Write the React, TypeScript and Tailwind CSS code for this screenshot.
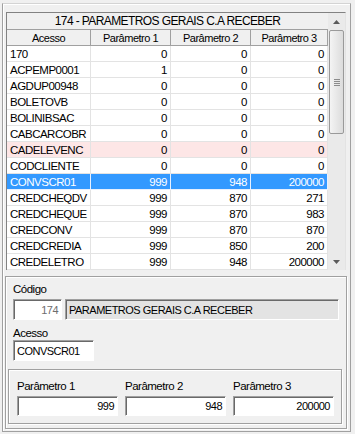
import React from "react";

const rows: { a: string; p1: string; p2: string; p3: string; kind?: "pink" | "sel" }[] = [
  { a: "170", p1: "0", p2: "0", p3: "0" },
  { a: "ACPEMP0001", p1: "1", p2: "0", p3: "0" },
  { a: "AGDUP00948", p1: "0", p2: "0", p3: "0" },
  { a: "BOLETOVB", p1: "0", p2: "0", p3: "0" },
  { a: "BOLINIBSAC", p1: "0", p2: "0", p3: "0" },
  { a: "CABCARCOBR", p1: "0", p2: "0", p3: "0" },
  { a: "CADELEVENC", p1: "0", p2: "0", p3: "0", kind: "pink" },
  { a: "CODCLIENTE", p1: "0", p2: "0", p3: "0" },
  { a: "CONVSCR01", p1: "999", p2: "948", p3: "200000", kind: "sel" },
  { a: "CREDCHEQDV", p1: "999", p2: "870", p3: "271" },
  { a: "CREDCHEQUE", p1: "999", p2: "870", p3: "983" },
  { a: "CREDCONV", p1: "999", p2: "870", p3: "870" },
  { a: "CREDCREDIA", p1: "999", p2: "850", p3: "200" },
  { a: "CREDELETRO", p1: "999", p2: "948", p3: "200000" },
];

const font = { fontFamily: '"Liberation Sans", Arial, sans-serif' };

function Input({ w, h, value, right, gray, dim }: { w: string; h: string; value: string; right?: boolean; gray?: boolean; dim?: boolean }) {
  return (
    <div
      className={`${w} ${h} flex items-center px-[3px] border-t border-l border-[#a0a0a0] border-r border-b border-r-white border-b-white shadow-[inset_1px_1px_0_#696969] text-[11px] tracking-[-0.5px] leading-[14px] ${right ? "justify-end" : "justify-start"} ${gray ? "bg-[#e3e3e3]" : "bg-white"} ${dim ? "text-[#6d6d6d]" : "text-black"}`}
    >
      {value}
    </div>
  );
}

export default function App() {
  return (
    <div className="w-[355px] h-[434px] bg-[#f0f0f0] pt-[3px] pl-[2px] overflow-hidden text-black" style={font}>
      <div className="w-[349px] h-[429px] border-t border-l border-r border-b border-t-[#d4d4d4] border-l-[#a0a0a0] border-r-[#a0a0a0] border-b-[#a0a0a0] shadow-[inset_1px_1px_0_#fff]">
        {/* Grid */}
        <div className="ml-[3px] mt-[8px] w-[340px] h-[258px] border-t border-l border-[#828282] border-r border-r-[#e3e3e3] flex bg-white">
          <div className="w-[321px] flex flex-col">
            <div className="h-[17px] bg-[#f0f0f0] border-b border-[#a0a0a0] flex items-center justify-center text-[12px] tracking-[-0.6px] leading-[14px]">
              174 - PARAMETROS GERAIS C.A RECEBER
            </div>
            <div className="h-[16px] flex bg-[#f0f0f0] text-[11px] tracking-[-0.5px] leading-[14px]">
              <div className="w-[84px] border-r border-b border-[#a0a0a0] flex items-center justify-center">Acesso</div>
              <div className="w-[80px] border-r border-b border-[#a0a0a0] flex items-center justify-center">Parâmetro 1</div>
              <div className="w-[80px] border-r border-b border-[#a0a0a0] flex items-center justify-center">Parâmetro 2</div>
              <div className="w-[77px] border-r border-b border-[#a0a0a0] flex items-center justify-center">Parâmetro 3</div>
            </div>
            {rows.map((r) => {
              const bg = r.kind === "sel" ? "bg-[#3399ff] text-white" : r.kind === "pink" ? "bg-[#fde6e6]" : "bg-white";
              const line = r.kind === "sel" ? "border-[#e8f0ff]" : "border-[#e3e3e3]";
              return (
                <div key={r.a} className={`h-[16px] flex text-[11.5px] tracking-[-0.5px] leading-[14px] ${bg}`}>
                  <div className={`w-[84px] border-r border-b ${line} flex items-center pl-[3px]`}>{r.a}</div>
                  <div className={`w-[80px] border-r border-b ${line} flex items-center justify-end pr-[3px]`}>{r.p1}</div>
                  <div className={`w-[80px] border-r border-b ${line} flex items-center justify-end pr-[3px]`}>{r.p2}</div>
                  <div className={`w-[77px] border-r border-b ${line} flex items-center justify-end pr-[3px]`}>{r.p3}</div>
                </div>
              );
            })}
          </div>
          {/* Scrollbar */}
          <div className="w-[17px] h-full bg-[#eaeaea] flex flex-col items-center">
            <div className="h-[17px] w-full flex items-center justify-center">
              <svg width="7" height="4" viewBox="0 0 7 4">
                <path d="M0 4 L3.5 0 L7 4 Z" fill="#5a5a5a" />
              </svg>
            </div>
            <div className="w-[15px] h-[104px] rounded-[2px] border border-[#9a9a9a] bg-gradient-to-r from-[#f4f4f4] to-[#dcdcdc] flex items-center justify-center">
              <div className="flex flex-col gap-[1px]">
                <div className="w-[6px] h-[1px] bg-[#8c8c8c]" />
                <div className="w-[6px] h-[1px] bg-[#8c8c8c]" />
                <div className="w-[6px] h-[1px] bg-[#8c8c8c]" />
                <div className="w-[6px] h-[1px] bg-[#8c8c8c]" />
              </div>
            </div>
            <div className="flex-1" />
            <div className="h-[17px] w-full flex items-center justify-center">
              <svg width="7" height="4" viewBox="0 0 7 4">
                <path d="M0 0 L3.5 4 L7 0 Z" fill="#5a5a5a" />
              </svg>
            </div>
          </div>
        </div>

        {/* Lower group */}
        <div className="ml-[2px] mt-[6px] w-[342px] h-[153px] border border-[#a0a0a0] shadow-[inset_1px_1px_0_#fff,1px_1px_0_#fff] flex flex-col pl-[7px] text-[11.5px] tracking-[-0.5px] leading-[14px]">
          <div className="mt-[5px] h-[14px]">Código</div>
          <div className="mt-[3px] flex gap-[3px]">
            <Input w="w-[49px]" h="h-[21px]" value="174" right dim />
            <Input w="w-[274px]" h="h-[21px]" value="PARAMETROS GERAIS C.A RECEBER" gray />
          </div>
          <div className="mt-[6px] h-[14px]">Acesso</div>
          <div className="mt-0">
            <Input w="w-[81px]" h="h-[21px]" value="CONVSCR01" />
          </div>
          <div className="-ml-[5px] mt-[8px] w-[334px] h-[55px] border border-[#a0a0a0] shadow-[inset_1px_1px_0_#fff,1px_1px_0_#fff] flex gap-[7px] pl-[8px]">
            {[
              ["Parâmetro 1", "999"],
              ["Parâmetro 2", "948"],
              ["Parâmetro 3", "200000"],
            ].map(([l, v]) => (
              <div key={l} className="flex flex-col">
                <div className="mt-[9px] h-[14px]">{l}</div>
                <div className="mt-[3px]">
                  <Input w="w-[101px]" h="h-[20px]" value={v} right />
                </div>
              </div>
            ))}
          </div>
        </div>
      </div>
    </div>
  );
}
